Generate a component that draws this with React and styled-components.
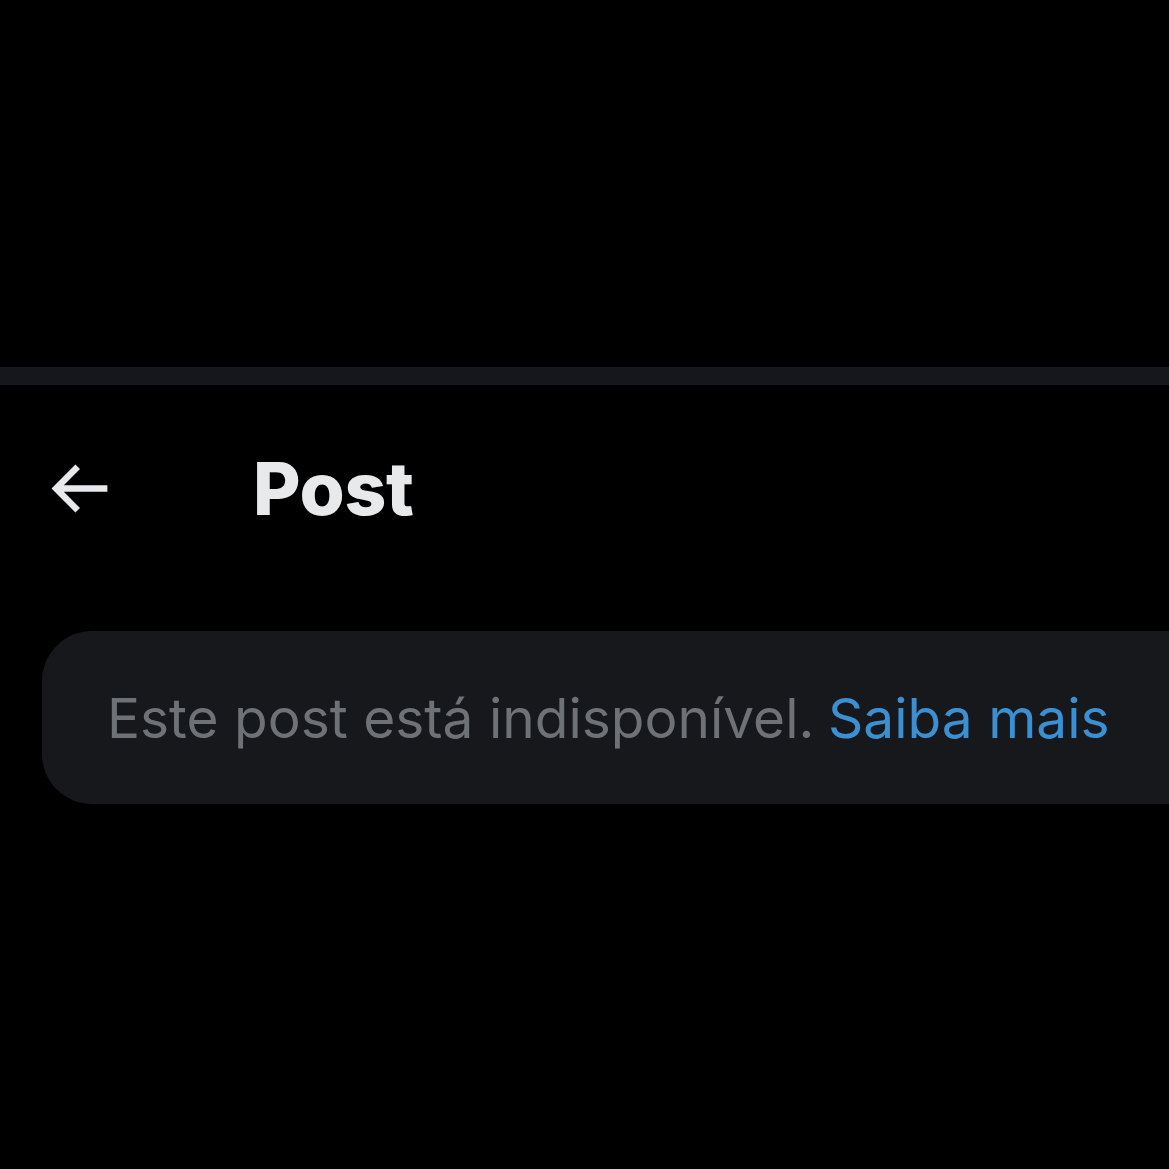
import React from 'react';
import styled, { createGlobalStyle } from 'styled-components';

const GlobalStyle = createGlobalStyle`
  html, body {
    margin: 0;
    padding: 0;
    background: #000;
  }
  body {
    font-family: Inter, "Noto Sans", "Liberation Sans", sans-serif;
    -webkit-font-smoothing: antialiased;
  }
`;

const Page = styled.div`
  width: 1169px;
  height: 1169px;
  overflow: hidden;
  background: #000;
  display: flex;
  flex-direction: column;
`;

const TopSpace = styled.div`
  height: 367px;
  flex-shrink: 0;
`;

const Divider = styled.div`
  height: 18px;
  background: #16161d;
  flex-shrink: 0;
`;

const Header = styled.header`
  height: 206px;
  display: flex;
  align-items: center;
  padding-left: 40px;
  flex-shrink: 0;
`;

const BackButton = styled.button`
  width: 77px;
  height: 77px;
  padding: 0;
  border: none;
  background: transparent;
  color: #e7e9ea;
  display: flex;
  align-items: center;
  justify-content: center;
  cursor: pointer;
  svg {
    width: 77px;
    height: 77px;
    fill: currentColor;
  }
`;

const Title = styled.h1`
  margin: 0 0 0 136px;
  font-size: 73px;
  font-weight: 800;
  color: #e7e9ea;
  letter-spacing: -0.3px;
  line-height: 1;
`;

const Notice = styled.div`
  margin: 40px 0 0 42px;
  width: calc(100% + 100px);
  height: 173px;
  box-sizing: border-box;
  padding-left: 65px;
  display: flex;
  align-items: center;
  background: #16181c;
  border-radius: 50px;
  font-size: 55px;
  color: #6e7176;
  white-space: nowrap;
`;

const Link = styled.a`
  color: #3b8fd3;
  text-decoration: none;
  margin-left: 0.25em;
`;

const ArrowLeft = () => (
  <svg viewBox="0 0 24 24" aria-hidden="true">
    <path d="M7.414 13l5.043 5.04-1.414 1.42L3.586 12l7.457-7.46 1.414 1.42L7.414 11H21v2H7.414z" />
  </svg>
);

const App = () => {
  return (
    <>
      <GlobalStyle />
      <Page>
        <TopSpace />
        <Divider />
        <Header>
          <BackButton aria-label="Voltar">
            <ArrowLeft />
          </BackButton>
          <Title>Post</Title>
        </Header>
        <Notice>
          Este post está indisponível.
          <Link href="#">Saiba mais</Link>
        </Notice>
      </Page>
    </>
  );
};

export default App;
